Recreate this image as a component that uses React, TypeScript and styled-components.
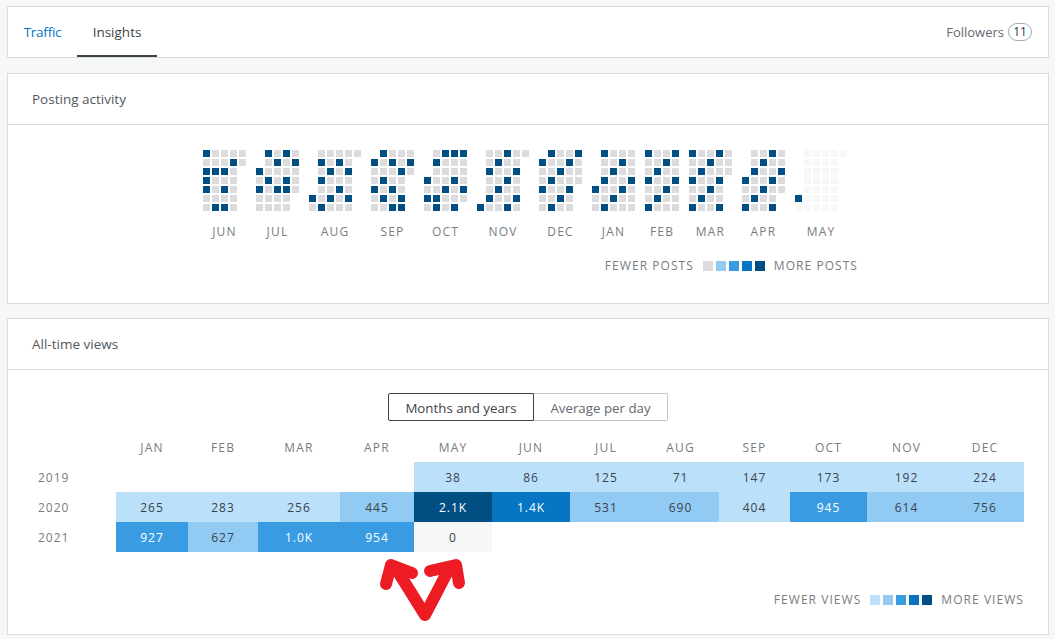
import React from "react";
import styled, { createGlobalStyle } from "styled-components";

const GlobalStyle = createGlobalStyle`
  html, body {
    margin: 0;
    padding: 0;
    background: #f6f7f7;
    font-family: "Open Sans", "Noto Sans", sans-serif;
    color: #50575e;
  }
`;

const SCALE = ["#bbe0fa", "#91caf2", "#399ce3", "#0675c4", "#004e82"];

const Page = styled.div`
  position: relative;
  width: 1055px;
  height: 639px;
  padding: 6px 6px 0 7px;
  box-sizing: border-box;
  overflow: hidden;
`;

const Card = styled.section`
  background: #fff;
  border: 1px solid #dcdcde;
  box-sizing: border-box;
`;

const TabBar = styled(Card)`
  height: 52px;
  display: flex;
  justify-content: space-between;
  margin-bottom: 15px;
`;

const Tabs = styled.nav`
  display: flex;
`;

const Tab = styled.div<{ $active?: boolean; $width: number }>`
  width: ${(p) => p.$width}px;
  text-align: center;
  font-size: 13.5px;
  line-height: 50px;
  height: 50px;
  box-sizing: border-box;
  letter-spacing: ${(p) => (p.$active ? "0" : "-0.25px")};
  color: ${(p) => (p.$active ? "#3c434a" : "#0675c4")};
  border-bottom: 2px solid ${(p) => (p.$active ? "#3c434a" : "transparent")};
`;

const Followers = styled.div`
  display: flex;
  align-items: center;
  padding-right: 16px;
  font-size: 13px;
  color: #646970;
`;

const Count = styled.span`
  margin-left: 4px;
  width: 24px;
  height: 18px;
  border: 1px solid #a7aaad;
  border-radius: 9px;
  box-sizing: border-box;
  line-height: 16px;
  text-align: center;
  font-size: 12px;
  color: #2c3338;
`;

const CardHeader = styled.header`
  height: 51px;
  display: flex;
  align-items: center;
  padding: 0 24px;
  font-size: 13.5px;
  color: #50575e;
  border-bottom: 1px solid #dcdcde;
  box-sizing: border-box;
`;

const PostingCard = styled(Card)`
  height: 231px;
  margin-bottom: 14px;
`;

const MonthsRow = styled.div`
  display: flex;
  justify-content: center;
  gap: 10px;
  padding: 25px 6px 0 0;
`;

const Month = styled.div`
  display: flex;
  flex-direction: column;
  align-items: center;
`;

const Weeks = styled.div<{ $cols: number }>`
  display: grid;
  grid-template-columns: repeat(${(p) => p.$cols}, 7px);
  grid-auto-rows: 7px;
  gap: 2px;
`;

const Day = styled.i<{ $kind: string }>`
  display: block;
  background: ${(p) =>
    p.$kind === "b"
      ? "#004e82"
      : p.$kind === "g"
      ? "#dcdcde"
      : p.$kind === "f"
      ? "#f6f7f7"
      : "transparent"};
`;

const MonthLabel = styled.div`
  margin-top: 13px;
  font-size: 12px;
  line-height: 16px;
  letter-spacing: 1.2px;
  color: #787c82;
`;

const Legend = styled.div<{ $right: number; $top: number }>`
  display: flex;
  justify-content: flex-end;
  align-items: center;
  padding: ${(p) => p.$top}px ${(p) => p.$right}px 0 0;
  font-size: 12px;
  line-height: 16px;
  letter-spacing: 1.05px;
  color: #787c82;
`;

const Swatches = styled.div`
  display: flex;
  gap: 3px;
  margin: 0 9px 0 9px;
`;

const Swatch = styled.i<{ $color: string }>`
  display: block;
  width: 10px;
  height: 10px;
  background: ${(p) => p.$color};
`;

const ViewsCard = styled(Card)`
  height: 317px;
`;

const Toggle = styled.div`
  display: flex;
  justify-content: center;
  padding: 23px 0 0 0;
`;

const ToggleButton = styled.div<{ $active?: boolean; $width: number }>`
  width: ${(p) => p.$width}px;
  height: 28px;
  line-height: 28px;
  text-align: center;
  font-size: 13.3px;
  box-sizing: border-box;
  color: ${(p) => (p.$active ? "#3c434a" : "#646970")};
  border: 1px solid ${(p) => (p.$active ? "#3c434a" : "#c3c4c7")};
  ${(p) => (p.$active ? "" : "border-left: none;")}
  border-radius: ${(p) => (p.$active ? "2px 0 0 2px" : "0 2px 2px 0")};
`;

const YearsGrid = styled.div`
  display: grid;
  grid-template-columns: 108px 72px 70px 82px 74px 78px 78px 72px 77px 71px 77px 79px 78px;
  grid-auto-rows: 30px;
  margin: 11px 0 0 0;
`;

const HeadCell = styled.div`
  font-size: 12px;
  line-height: 32px;
  letter-spacing: 1.2px;
  text-align: center;
  color: #787c82;
`;

const YearCell = styled.div`
  font-size: 12px;
  line-height: 31px;
  letter-spacing: 1px;
  padding-left: 30px;
  color: #787c82;
`;

const ValueCell = styled.div<{ $level: number }>`
  font-size: 12px;
  line-height: 31px;
  letter-spacing: 1px;
  text-align: center;
  background: ${(p) =>
    p.$level < 0 ? "transparent" : p.$level === 9 ? "#f6f7f7" : SCALE[p.$level]};
  color: ${(p) => (p.$level >= 2 && p.$level !== 9 ? "#fff" : "#3c434a")};
`;

const Scribble = styled.svg`
  position: absolute;
  left: 0;
  top: 0;
  pointer-events: none;
`;

const MONTHS = [
  { label: "JUN", rows: ["bgggg", "gggbg", "bbbg.", "bggg.", "bgbg.", "gggg.", "gbbg."] },
  { label: "JUL", rows: [".bgbg", ".gbgb", "bgggg", "gbgbg", "bgbbg", "gggg.", "gggg."] },
  { label: "AUG", rows: [".ggggg", ".bgbg.", ".gbgb.", ".bggg.", ".ggbg.", "bgbgb.", "gbggg."] },
  { label: "SEP", rows: [".bggg", "bgbgb", "gggbg", "gbgg.", "bgbg.", "gbgb.", "ggbb."] },
  { label: "OCT", rows: [".gbbb", ".bggg", ".gggg", "bggbg", "ggbgb", "bbggg", "gbgb."] },
  { label: "NOV", rows: [".ggbgg", ".gbgg.", ".bggb.", ".ggbg.", ".gbgg.", ".bggb.", "bggbg."] },
  { label: "DEC", rows: [".bggb", "bggbg", "ggbgg", "gbggg", "bggb.", "ggbg.", "gbgg."] },
  { label: "JAN", rows: [".bggg", ".ggbg", ".gbgg", ".bggb", "bggbg", "ggbgg", "gbggg"] },
  { label: "FEB", rows: ["bggb", "ggbg", "gbgg", "bggb", "ggbg", "gbgg", "bggg"] },
  { label: "MAR", rows: ["bggbg", "ggbgg", "gbggg", "bggb.", "ggbg.", "gbgg.", "bggb."] },
  { label: "APR", rows: [".ggbg", ".gbgg", ".bggb", "bggbg", "ggbgg", "gbgg.", "bggb."] },
  { label: "MAY", rows: [".fffff", ".ffff.", ".ffff.", ".ffff.", ".ffff.", "bffff.", "fffff."] },
];

const HEAD = ["JAN", "FEB", "MAR", "APR", "MAY", "JUN", "JUL", "AUG", "SEP", "OCT", "NOV", "DEC"];

type Value = [string, number] | null;

const YEARS: { year: string; values: Value[] }[] = [
  {
    year: "2019",
    values: [null, null, null, null, ["38", 0], ["86", 0], ["125", 0], ["71", 0], ["147", 0], ["173", 0], ["192", 0], ["224", 0]],
  },
  {
    year: "2020",
    values: [["265", 0], ["283", 0], ["256", 0], ["445", 1], ["2.1K", 4], ["1.4K", 3], ["531", 1], ["690", 1], ["404", 0], ["945", 2], ["614", 1], ["756", 1]],
  },
  {
    year: "2021",
    values: [["927", 2], ["627", 1], ["1.0K", 2], ["954", 2], ["0", 9], null, null, null, null, null, null, null],
  },
];

export default function App() {
  return (
    <Page>
      <GlobalStyle />
      <TabBar>
        <Tabs>
          <Tab $width={69}>Traffic</Tab>
          <Tab $active $width={80}>Insights</Tab>
        </Tabs>
        <Followers>
          Followers <Count>11</Count>
        </Followers>
      </TabBar>

      <PostingCard>
        <CardHeader>Posting activity</CardHeader>
        <MonthsRow>
          {MONTHS.map((m) => (
            <Month key={m.label}>
              <Weeks $cols={m.rows[0].length}>
                {m.rows.join("").split("").map((kind, i) => (
                  <Day key={i} $kind={kind} />
                ))}
              </Weeks>
              <MonthLabel>{m.label}</MonthLabel>
            </Month>
          ))}
        </MonthsRow>
        <Legend $right={190} $top={18}>
          FEWER POSTS
          <Swatches>
            {["#dcdcde", SCALE[1], SCALE[2], SCALE[3], SCALE[4]].map((c) => (
              <Swatch key={c} $color={c} />
            ))}
          </Swatches>
          MORE POSTS
        </Legend>
      </PostingCard>

      <ViewsCard>
        <CardHeader>All-time views</CardHeader>
        <Toggle>
          <ToggleButton $active $width={146}>Months and years</ToggleButton>
          <ToggleButton $width={134}>Average per day</ToggleButton>
        </Toggle>
        <YearsGrid>
          <div />
          {HEAD.map((h) => (
            <HeadCell key={h}>{h}</HeadCell>
          ))}
          {YEARS.map((row) => (
            <React.Fragment key={row.year}>
              <YearCell>{row.year}</YearCell>
              {row.values.map((v, i) =>
                v ? (
                  <ValueCell key={i} $level={v[1]}>{v[0]}</ValueCell>
                ) : (
                  <ValueCell key={i} $level={-1} />
                ),
              )}
            </React.Fragment>
          ))}
        </YearsGrid>
        <Legend $right={24} $top={40}>
          FEWER VIEWS
          <Swatches>
            {SCALE.map((c) => (
              <Swatch key={c} $color={c} />
            ))}
          </Swatches>
          MORE VIEWS
        </Legend>
      </ViewsCard>

      <Scribble width="1055" height="639" viewBox="0 0 1055 639">
        <path
          d="M386 584L391 565L412 573M395 567L425 615L450 567M430 571L456 565L459 583"
          fill="none"
          stroke="#ed1c24"
          strokeWidth="12"
          strokeLinecap="round"
          strokeLinejoin="round"
        />
      </Scribble>
    </Page>
  );
}
